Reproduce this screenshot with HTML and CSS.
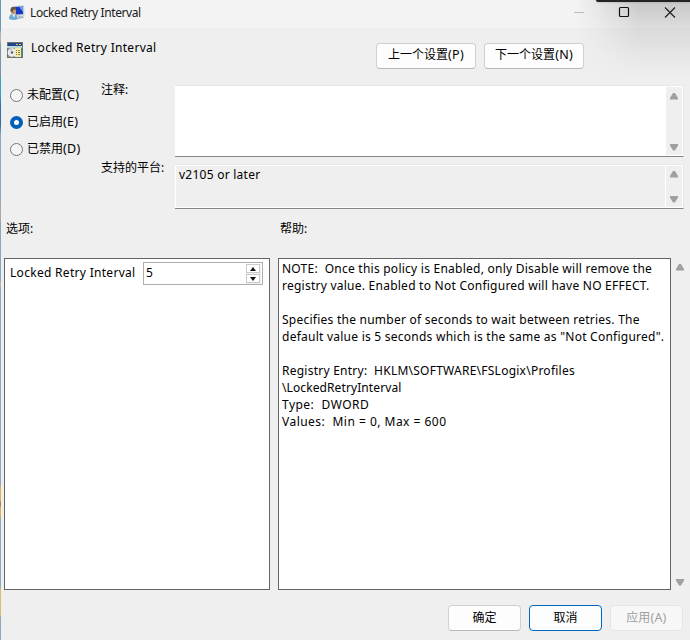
FILE: index.html
```html
<!DOCTYPE html>
<html lang="zh-CN">
<head>
<meta charset="utf-8">
<title>Locked Retry Interval</title>
<link rel="stylesheet" href="styles.css">
</head>
<body>
<div class="window">
  <div class="backdrop-edge"></div>
  <div class="shade"></div>
  <div class="dark-window"></div>
  <header class="titlebar">
    <svg class="app-icon" width="17" height="16" viewBox="0 0 17 16">
      <path d="M5 1L15 .5 15.500 10.500 6 11z" fill="#c5ccd5"/>
      <path d="M6 2L14 1.500V9L7 9.500z" fill="#1738c4"/>
      <path d="M10 1.800L14 1.500V7z" fill="#6f9cf0"/>
      <path d="M9 11h5l1 2-6 1z" fill="#b4bac0"/>
      <path d="M0 14q0-5 4-5t5 5q-4 2-9 0z" fill="#6fa9d6"/>
      <path d="M3 9h3l-1 4z" fill="#eef5fa"/>
      <ellipse cx="4.400" cy="5.700" rx="2.700" ry="3.700" fill="#c29b73"/>
      <path d="M1.500 6Q1 1.500 5 1.700q2.500.3 2 3-3-1.200-3.500 3z" fill="#625747"/>
    </svg>
    <span class="window-title">Locked Retry Interval</span>
    <svg class="caption-icons" width="110" height="28" viewBox="0 0 110 28" fill="none">
      <path d="M4 12.500h10" stroke="#bcbcbc"/>
      <rect x="49.500" y="7.500" width="9" height="9" rx="1" stroke="#111" stroke-width="1.200"/>
      <path d="M95 7.500l10 10M105 7.500l-10 10" stroke="#222" stroke-width="1.200"/>
    </svg>
  </header>

  <section class="heading">
    <svg class="policy-icon" width="16" height="16" viewBox="0 0 16 16">
      <path d="M0 0h16v16H0z" fill="#6d7770"/>
      <path d="M1 1h14v3H1z" fill="#21448f"/>
      <path d="M9 2h2v1H9zM12 2h2v1h-2z" fill="#e5c84b"/>
      <path d="M0 4h15v2H0z" fill="#bcd6d6"/>
      <path d="M1 6h14v9H1z" fill="#8d9387"/>
      <circle cx="5" cy="10.500" r="4.300" fill="#e9ecf0"/>
      <path d="M5 10l-3-3 3-.7z" fill="#d7c0de"/>
      <circle cx="5" cy="10.500" r="1.200" fill="#586068"/>
      <path d="M8 6h6v9H8z" fill="#f6eda9"/>
      <path d="M9 8.500h1M11 8.500h2M9 10.500h1M11 10.500h2M9 12.500h1M11 12.500h2" stroke="#a0792d"/>
      <path d="M14 6h1v9h-1z" fill="#3f8b88"/>
    </svg>
    <h1>Locked Retry Interval</h1>
    <div class="nav-buttons">
      <button class="btn nav">上一个设置<span class="l">(P)</span></button>
      <button class="btn nav">下一个设置<span class="l">(N)</span></button>
    </div>
  </section>

  <section class="settings">
    <div class="radios">
      <label><i class="radio"></i>未配置<span class="l">(C)</span></label>
      <label><i class="radio on"></i>已启用<span class="l">(E)</span></label>
      <label><i class="radio"></i>已禁用<span class="l">(D)</span></label>
    </div>
    <div class="captions"><span>注释:</span><span>支持的平台:</span></div>
    <div class="boxes">
      <div class="box comment">
        <div class="box-text"></div>
        <div class="scroll">
          <svg width="8" height="7"><path d="M3 0h2l3 5v1.500H0V5z" fill="#a0a0a0"/></svg>
          <svg width="8" height="7"><path d="M3 6.500h2l3-5V0H0v1.500z" fill="#a0a0a0"/></svg>
        </div>
      </div>
      <div class="box platform">
        <div class="box-text"><span class="t-platform">v2105 or later</span></div>
        <div class="scroll">
          <svg width="8" height="7"><path d="M3 0h2l3 5v1.500H0V5z" fill="#a0a0a0"/></svg>
          <svg width="8" height="7"><path d="M3 6.500h2l3-5V0H0v1.500z" fill="#a0a0a0"/></svg>
        </div>
      </div>
    </div>
  </section>

  <div class="panel-labels"><span>选项:</span><span>帮助:</span></div>

  <main class="panels">
    <div class="panel options">
      <span class="option-name">Locked Retry Interval</span>
      <div class="spinner">
        <span>5</span>
        <div class="steps">
          <div class="step"><svg width="6" height="4"><path d="M3 0l3 4H0z" fill="#111"/></svg></div>
          <div class="step"><svg width="6" height="4"><path d="M3 4l3-4H0z" fill="#111"/></svg></div>
        </div>
      </div>
    </div>
    <div class="panel help">NOTE:  Once this policy is Enabled, only Disable will remove the
registry value. Enabled to Not Configured will have NO EFFECT.

Specifies the number of seconds to wait between retries. The
default value is 5 seconds which is the same as "Not Configured".

Registry Entry:  HKLM\SOFTWARE\FSLogix\Profiles
<span class="key-name">\LockedRetryInterval</span>
<span class="key-meta">Type:  DWORD
Values:  Min = 0, Max = 600</span></div>
    <div class="help-scroll">
      <svg width="8" height="7"><path d="M3 0h2l3 5v1.500H0V5z" fill="#a0a0a0"/></svg>
      <svg width="8" height="7"><path d="M3 6.500h2l3-5V0H0v1.500z" fill="#a0a0a0"/></svg>
    </div>
  </main>

  <footer class="actions">
    <button class="btn">确定</button>
    <button class="btn focused">取消</button>
    <button class="btn disabled">应用<span class="l">(A)</span></button>
  </footer>
</div>
</body>
</html>
```
FILE: styles.css
```css
* { box-sizing: border-box; }
body {
  margin: 0;
  font: 12px/17px "Noto Sans", "Noto Sans CJK SC", sans-serif;
  color: #000;
}
svg { display: block; flex: none; }
.window {
  position: relative;
  width: 690px;
  height: 640px;
  overflow: hidden;
  background: #efefef;
  display: flex;
  flex-direction: column;
}
.backdrop-edge {
  position: absolute;
  left: 0;
  top: 0;
  width: 1px;
  height: 640px;
  background: linear-gradient(#6699b4 0 30px, #c3b3a6 34px 40px, #7895ad 46px 75px, #36a3c4 80px 95px, #3470a5 105px 125px, #8ba8c1 135px 200px, #b4a59e 205px 218px, #8ba5bd 225px 280px, #c1b8a8 284px, #8fa6bb 290px 485px, #dfb44e 488px 500px, #8d7654 504px, #dfb44e 508px 515px, #8fa6bb 520px 585px, #dfbd6d 590px 615px, #8fa6bb 618px);
}
.shade {
  position: absolute;
  right: 0;
  top: 0;
  width: 115px;
  height: 80px;
  background: linear-gradient(rgba(0,0,0,.18), rgba(0,0,0,.09) 35%, rgba(0,0,0,.03) 70%, transparent);
  -webkit-mask-image: linear-gradient(90deg, transparent, rgba(0,0,0,.3) 20%, #000 55%);
  mask-image: linear-gradient(90deg, transparent, rgba(0,0,0,.3) 20%, #000 55%);
}
.dark-window {
  position: absolute;
  right: 0;
  top: 0;
  width: 94px;
  height: 2px;
  background: #252222;
  border-radius: 0 0 0 4px;
  box-shadow: 0 0 2px rgba(0,0,0,.3);
}
.titlebar {
  height: 28px;
  flex: none;
  display: flex;
  padding-left: 8px;
  margin-left: 1px;
  background: #f3f3f3;
}
.app-icon { margin-top: 5px; }
.window-title { margin: 4px 0 0 4px; font-size: 12px; letter-spacing: -.4px; color: #1a1a1a; }
.caption-icons { margin-left: auto; margin-right: 10px; position: relative; }
.heading { display: flex; height: 57px; flex: none; padding-left: 7px; }
.policy-icon { margin-top: 14px; }
h1 { margin: 11px 0 0 8px; width: 345px; font-size: 12px; font-weight: 400; letter-spacing: .3px; }
.nav-buttons { display: flex; gap: 8px; padding-top: 15px; position: relative; }
.btn {
  width: 73px;
  height: 26px;
  padding: 0 0 2px;
  border: 1px solid #d0d0d0;
  border-bottom-color: #b9b9b9;
  border-radius: 4px;
  background: #fdfdfd;
  font: inherit;
  color: #000;
}
.btn.nav { width: 100px; padding-bottom: 3px; }
.l { font-size: 12.5px; letter-spacing: .25px; }
.btn.focused { border-color: #0067c0; }
.btn.disabled { border-color: #e5e5e5; background: #f7f7f7; color: #a0a0a0; }
.settings { display: grid; grid-template-columns: 91px 74px 509px; height: 124px; flex: none; padding-left: 10px; position: relative; }
.radios { display: flex; flex-direction: column; gap: 10px; padding-top: 1px; }
.radios label { display: flex; height: 17px; align-items: center; }
.radio { width: 13px; height: 13px; margin: 1px 4px 0 0; border: 1px solid #777; border-radius: 50%; background: #f5f5f5; }
.radio.on { border: 4px solid #005fb8; background: #fff; }
.captions { display: flex; flex-direction: column; gap: 61px; margin-top: -4px; }
.boxes { display: flex; flex-direction: column; gap: 7px; }
.box { display: flex; border: 1px solid #e8e8e8; border-left: 0; border-bottom-color: #858585; background: #fff; }
.comment { height: 72px; padding: 1px 1px 1px 0; }
.platform { height: 45px; padding: 1px; }
.platform .box-text { background: #efefef; margin-right: 1px; padding: 0 3px; }
.box-text { flex: 1; }
.t-platform { letter-spacing: .25px; }
.scroll { width: 16px; display: flex; flex-direction: column; justify-content: space-between; align-items: center; padding: 6px 0 4px; background: #efefef; }
.platform .scroll { padding-top: 5px; }
.panel-labels { display: grid; grid-template-columns: 274px 1fr; height: 49px; flex: none; padding: 11px 0 0 6px; }
.panels { display: grid; grid-template-columns: 266px 8px 393px 17px; height: 332px; flex: none; padding-left: 4px; }
.panel { border: 1px solid #646464; background: #fff; }
.options { display: flex; padding: 3px 6px 0 5px; }
.option-name { width: 133px; letter-spacing: .3px; margin-top: 2px; }
.spinner { width: 120px; height: 23px; border: 1px solid #abadb3; display: flex; justify-content: space-between; padding: 1px 1px 0 2px; }
.steps { width: 15px; height: 20px; background: #f0f0f0; }
.step { width: 14px; height: 9px; margin-bottom: 1px; border: 1px solid #cacaca; background: #fff; display: flex; align-items: center; justify-content: center; }
.help { grid-column: 3; white-space: pre; padding: 1px 0 0 3px; letter-spacing: .245px; }
.key-name { letter-spacing: .1px; }
.key-meta { letter-spacing: .48px; }
.help-scroll { display: flex; flex-direction: column; justify-content: space-between; align-items: center; padding: 6px 0 4px; }
.actions { display: flex; gap: 8px; justify-content: flex-end; padding: 15px 7px 0 0; }
```
